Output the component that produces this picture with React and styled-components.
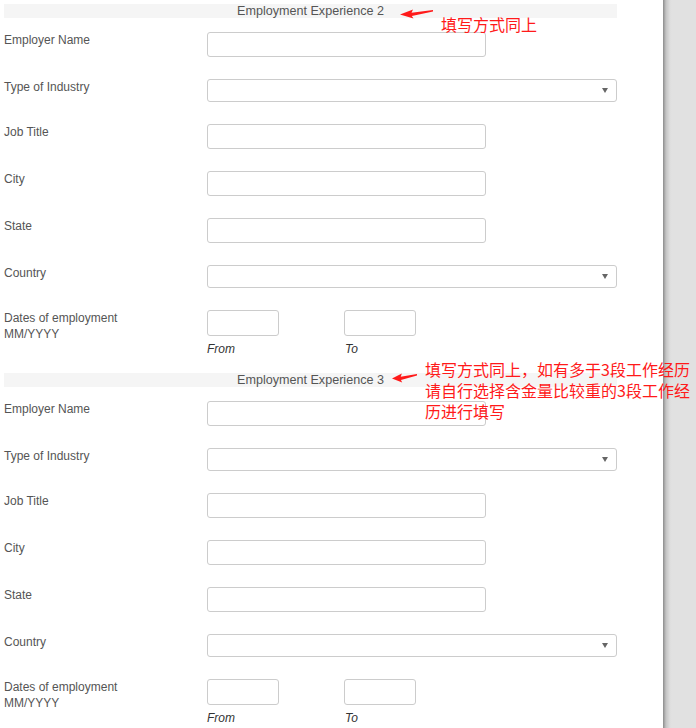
import React from 'react';
import styled, { createGlobalStyle } from 'styled-components';

const GlobalStyle = createGlobalStyle`
  html, body {
    margin: 0;
    padding: 0;
    background: #fff;
  }
  body {
    font-family: 'Liberation Sans', Arial, sans-serif;
  }
`;

const Page = styled.div`
  display: flex;
  min-height: 728px;
`;

const Main = styled.div`
  width: 659px;
  padding: 4px 0 0 4px;
  background: #fff;
`;

const Side = styled.div`
  flex: 1;
  background: linear-gradient(to right, #8c8c8c 0px, #c4c4c4 3px, #dedede 7px, #e1e1e1 9px);
`;

const Section = styled.div`
  position: relative;
  width: 613px;
  margin-bottom: 17px;
`;

const Header = styled.div`
  height: 14px;
  background: #f5f5f5;
  color: #555;
  font-size: 12.6px;
  line-height: 14px;
  text-align: center;
  margin-bottom: 14px;
`;

const Row = styled.div`
  display: grid;
  grid-template-columns: 203px 1fr;
  margin-bottom: 22px;

  &:last-child {
    margin-bottom: 0;
  }
`;

const Label = styled.div`
  color: #555;
  font-size: 12px;
  line-height: 16px;
`;

const TextInput = styled.div`
  width: 279px;
  height: 25px;
  box-sizing: border-box;
  border: 1px solid #ccc;
  border-radius: 3px;
  background: #fff;
`;

const Select = styled.div`
  position: relative;
  width: 410px;
  height: 23px;
  box-sizing: border-box;
  border: 1px solid #ccc;
  border-radius: 3px;
  background: #fff;

  &::after {
    content: '';
    position: absolute;
    right: 8px;
    top: 8px;
    border-left: 3px solid transparent;
    border-right: 3px solid transparent;
    border-top: 5px solid #666;
  }
`;

const DateGroup = styled.div`
  display: flex;
`;

const DateCol = styled.div`
  width: 137px;
`;

const DateInput = styled.div`
  width: 72px;
  height: 26px;
  box-sizing: border-box;
  border: 1px solid #ccc;
  border-radius: 3px;
  background: #fff;
  margin-bottom: 6px;
`;

const Caption = styled.div`
  font-size: 12px;
  line-height: 14px;
  font-style: italic;
  color: #333;
  padding-left: ${(p) => p.$shift || 0}px;
`;

const Note = styled.div`
  position: absolute;
  left: ${(p) => p.$x}px;
  top: ${(p) => p.$y}px;
  display: flex;
  align-items: flex-start;
  gap: ${(p) => p.$gap}px;
  pointer-events: none;
`;

const NoteText = styled.div`
  color: #ff1a1a;
  font-family: 'Noto Sans CJK SC', 'Liberation Sans', sans-serif;
  font-size: 16px;
  line-height: 21px;
  white-space: nowrap;
  margin-top: ${(p) => p.$offset}px;
`;

const ArrowBox = styled.div`
  flex-shrink: 0;
  margin-top: ${(p) => p.$offset}px;
  line-height: 0;
`;

const Arrow = ({ width = 33 }) => (
  <svg width={width} height="11" viewBox="0 0 33 11" preserveAspectRatio="none">
    <path d="M0 6.5 L13 1.5 L11.5 4.8 L33 2 L33 3.6 L11.8 8 L13.5 10.6 Z" fill="#ff1a1a" />
  </svg>
);

const fields = [
  { label: 'Employer Name', kind: 'input' },
  { label: 'Type of Industry', kind: 'select' },
  { label: 'Job Title', kind: 'input' },
  { label: 'City', kind: 'input' },
  { label: 'State', kind: 'input' },
  { label: 'Country', kind: 'select' },
];

const Experience = ({ n, children }) => (
  <Section>
    {children}
    <Header>Employment Experience {n}</Header>
    {fields.map((f) => (
      <Row key={f.label}>
        <Label>{f.label}</Label>
        {f.kind === 'input' ? <TextInput /> : <Select />}
      </Row>
    ))}
    <Row>
      <Label>
        Dates of employment
        <br />
        MM/YYYY
      </Label>
      <DateGroup>
        <DateCol>
          <DateInput />
          <Caption>From</Caption>
        </DateCol>
        <DateCol>
          <DateInput />
          <Caption $shift={1}>To</Caption>
        </DateCol>
      </DateGroup>
    </Row>
  </Section>
);

export default function App() {
  return (
    <>
      <GlobalStyle />
      <Page>
        <Main>
          <Experience n={2}>
            <Note $x={396} $y={4} $gap={8}>
              <ArrowBox $offset={0}>
                <Arrow />
              </ArrowBox>
              <NoteText $offset={6}>填写方式同上</NoteText>
            </Note>
          </Experience>
          <Experience n={3}>
            <Note $x={388} $y={-14} $gap={8}>
              <ArrowBox $offset={13}>
                <Arrow width={25} />
              </ArrowBox>
              <NoteText $offset={0}>
                填写方式同上，如有多于3段工作经历
                <br />
                请自行选择含金量比较重的3段工作经
                <br />
                历进行填写
              </NoteText>
            </Note>
          </Experience>
        </Main>
        <Side />
      </Page>
    </>
  );
}
